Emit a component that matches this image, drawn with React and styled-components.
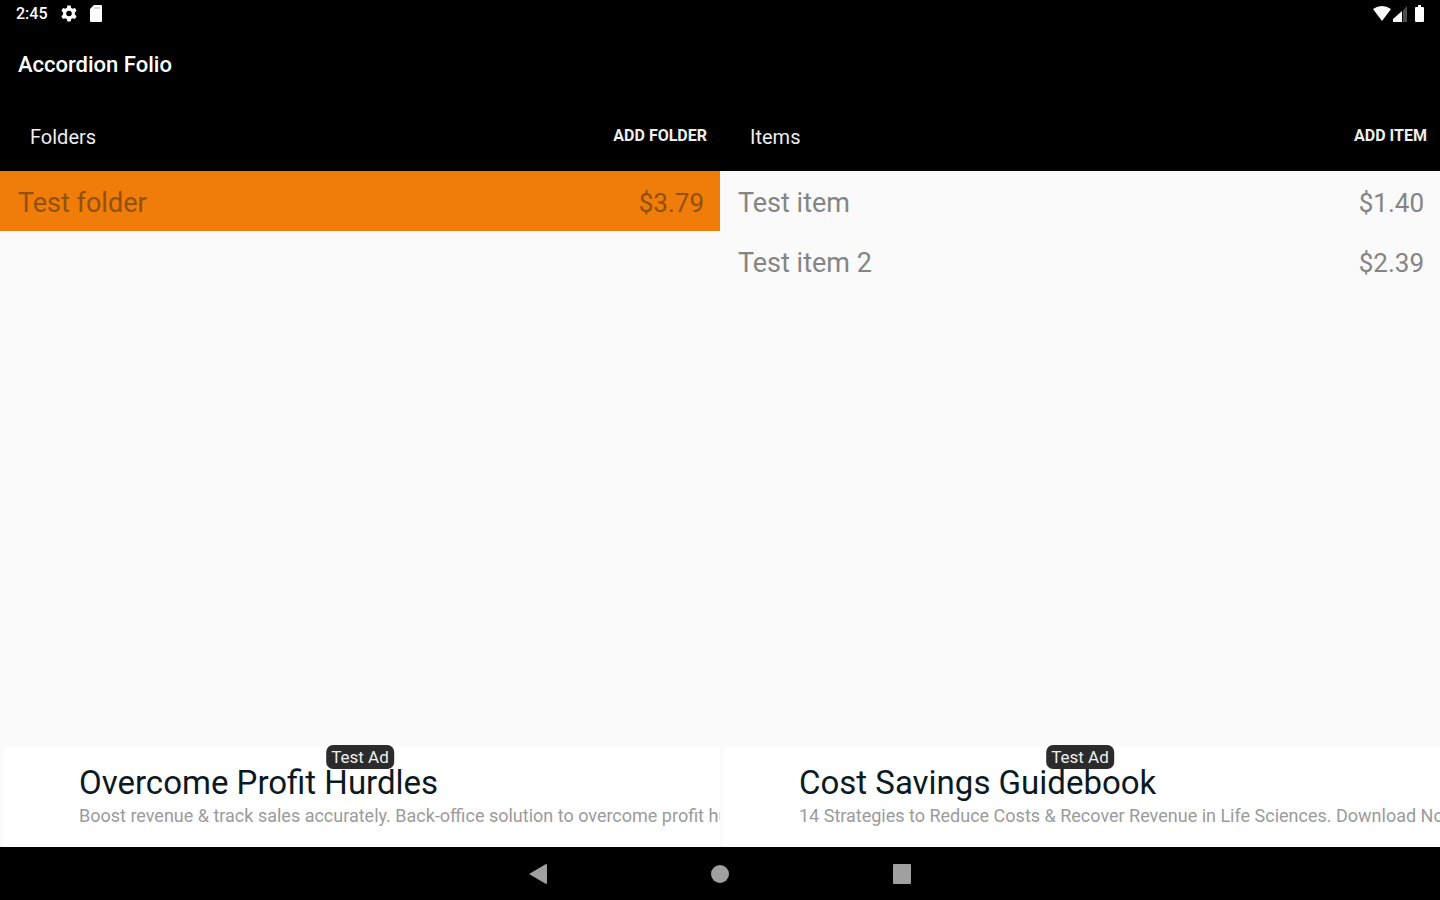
import styled, { createGlobalStyle } from "styled-components";

const GlobalStyle = createGlobalStyle`
  * {
    box-sizing: border-box;
  }
  body {
    margin: 0;
    background: black;
    font-family: Roboto, sans-serif;
  }
`;

const Screen = styled.div`
  display: flex;
  flex-direction: column;
  min-height: 100vh;
`;

const StatusBar = styled.div`
  display: flex;
  align-items: center;
  justify-content: space-between;
  height: 27px;
  padding: 0 16px;
  color: white;
`;

const StatusGroup = styled.div`
  display: flex;
  align-items: center;
  gap: ${({ $gap }) => $gap}px;
`;

const Clock = styled.span`
  font-size: 16px;
  font-weight: 500;
`;

const AppBar = styled.header`
  display: flex;
  align-items: center;
  height: 75px;
  padding: 0 18px;
`;

const AppTitle = styled.h1`
  margin: 0;
  color: white;
  font-size: 22px;
  font-weight: 500;
`;

const Panes = styled.main`
  display: grid;
  grid-template-columns: 1fr 1fr;
  flex: 1;
  background: #fafafa;
`;

const Pane = styled.section`
  display: flex;
  flex-direction: column;
  min-width: 0;
`;

const PaneHeader = styled.div`
  display: flex;
  align-items: center;
  justify-content: space-between;
  height: 69px;
  padding: 0 13px 0 30px;
  background: black;
`;

const PaneTitle = styled.h2`
  margin: 0;
  color: #eeeeee;
  font-size: 20px;
  font-weight: 400;
`;

const AddButton = styled.button`
  padding: 0 0 2px;
  border: 0;
  background: none;
  color: #eeeeee;
  font: 700 16px Roboto, sans-serif;
  text-transform: uppercase;
  cursor: pointer;
`;

const List = styled.ul`
  flex: 1;
  margin: 0;
  padding: 0;
  list-style: none;
`;

const Row = styled.li`
  display: flex;
  align-items: center;
  justify-content: space-between;
  height: 60px;
  padding: 4px 16px 0 18px;
  background: ${({ $selected }) => ($selected ? "#f07c0a" : "transparent")};
  color: ${({ $selected }) => ($selected ? "#91510f" : "#858585")};
  font-size: 27px;
`;

const Price = styled.span`
  font-size: 26px;
`;

const AdSlot = styled.div`
  position: relative;
`;

const Ad = styled.a`
  display: block;
  height: 100px;
  margin-left: 3px;
  padding: 16px 0 0 76px;
  overflow: hidden;
  background: white;
  text-decoration: none;
  white-space: nowrap;
`;

const AdBadge = styled.span`
  position: absolute;
  top: -2px;
  left: 50%;
  padding: 0 5px;
  border-radius: 7px;
  background: #2b2b2b;
  color: #eeeeee;
  font-size: 17px;
  line-height: 24px;
  transform: translateX(-50%);
`;

const AdTitle = styled.div`
  color: #0b1a22;
  font-size: 33px;
  line-height: 40px;
`;

const AdText = styled.div`
  color: #9b9b9b;
  font-size: 18px;
  line-height: 26px;
`;

const NavBar = styled.nav`
  display: flex;
  align-items: center;
  justify-content: center;
  gap: 152px;
  height: 53px;
`;

const NavButton = styled.button`
  display: flex;
  align-items: center;
  justify-content: center;
  width: 30px;
  height: 30px;
  padding: 0;
  border: 0;
  background: none;
  color: #a0a0a0;
`;

const GearIcon = () => (
  <svg width="16" height="17" viewBox="2 2 20 20" fill="currentColor" aria-hidden="true">
    <path
      fillRule="evenodd"
      d="M10 2h4l.6 2.900 2 1.200 2.900-1 2 3.500-2.200 2v2.800l2.200 2-2 3.500-2.900-1-2 1.200L14 22h-4l-.6-2.900-2-1.200-2.900 1-2-3.500 2.200-2v-2.800l-2.200-2 2-3.500 2.900 1 2-1.200zM12 8.500a3.500 3.500 0 1 0 0 7 3.500 3.500 0 1 0 0-7z"
    />
  </svg>
);

const CardIcon = () => (
  <svg width="12" height="17" viewBox="0 0 12 17" fill="currentColor" aria-hidden="true">
    <path d="M4 0h7q1 0 1 1v15q0 1-1 1H1q-1 0-1-1V4z" />
    <path d="M4 3h6" stroke="#aaa" />
  </svg>
);

const WifiIcon = () => (
  <svg width="18" height="15" viewBox="0 0 18 15" fill="currentColor" aria-hidden="true">
    <path d="M0 3q9-6 18 0L9 15z" />
  </svg>
);

const SignalIcon = () => (
  <svg width="14" height="16" viewBox="0 0 14 16" fill="currentColor" aria-hidden="true">
    <path d="M10 4.500L14 0v16h-4z" opacity="0.3" />
    <path d="M0 16v-3L9 5v11z" />
  </svg>
);

const BatteryIcon = () => (
  <svg width="9" height="17" viewBox="0 0 9 17" fill="currentColor" aria-hidden="true">
    <path d="M3 0h3v2h2q1 0 1 1v13q0 1-1 1H1q-1 0-1-1V3q0-1 1-1h2z" />
  </svg>
);

const panes = [
  {
    title: "Folders",
    action: "Add folder",
    rows: [{ name: "Test folder", price: "$3.79", selected: true }],
    ad: {
      title: "Overcome Profit Hurdles",
      text: "Boost revenue & track sales accurately. Back-office solution to overcome profit hurdles.",
    },
  },
  {
    title: "Items",
    action: "Add item",
    rows: [
      { name: "Test item", price: "$1.40" },
      { name: "Test item 2", price: "$2.39" },
    ],
    ad: {
      title: "Cost Savings Guidebook",
      text: "14 Strategies to Reduce Costs & Recover Revenue in Life Sciences. Download Now.",
    },
  },
];

export default function App() {
  return (
    <Screen>
      <GlobalStyle />
      <StatusBar>
        <StatusGroup $gap={13}>
          <Clock>2:45</Clock>
          <GearIcon />
          <CardIcon />
        </StatusGroup>
        <StatusGroup $gap={8}>
          <StatusGroup $gap={2}>
            <WifiIcon />
            <SignalIcon />
          </StatusGroup>
          <BatteryIcon />
        </StatusGroup>
      </StatusBar>
      <AppBar>
        <AppTitle>Accordion Folio</AppTitle>
      </AppBar>
      <Panes>
        {panes.map(({ title, action, rows, ad }) => (
          <Pane key={title}>
            <PaneHeader>
              <PaneTitle>{title}</PaneTitle>
              <AddButton type="button">{action}</AddButton>
            </PaneHeader>
            <List>
              {rows.map(({ name, price, selected }) => (
                <Row key={name} $selected={selected}>
                  <span>{name}</span>
                  <Price>{price}</Price>
                </Row>
              ))}
            </List>
            <AdSlot>
              <Ad href="#">
                <AdTitle>{ad.title}</AdTitle>
                <AdText>{ad.text}</AdText>
              </Ad>
              <AdBadge>Test Ad</AdBadge>
            </AdSlot>
          </Pane>
        ))}
      </Panes>
      <NavBar>
        <NavButton type="button" aria-label="Back">
          <svg width="18" height="20" viewBox="0 0 18 20" fill="currentColor">
            <path d="M17 0q1 0 1 1v18q0 1-1 1L0 10z" />
          </svg>
        </NavButton>
        <NavButton type="button" aria-label="Home">
          <svg width="18" height="18" viewBox="0 0 18 18" fill="currentColor">
            <circle cx="9" cy="9" r="9" />
          </svg>
        </NavButton>
        <NavButton type="button" aria-label="Recent apps">
          <svg width="18" height="20" viewBox="0 0 18 20" fill="currentColor">
            <rect width="18" height="20" rx="1" />
          </svg>
        </NavButton>
      </NavBar>
    </Screen>
  );
}
